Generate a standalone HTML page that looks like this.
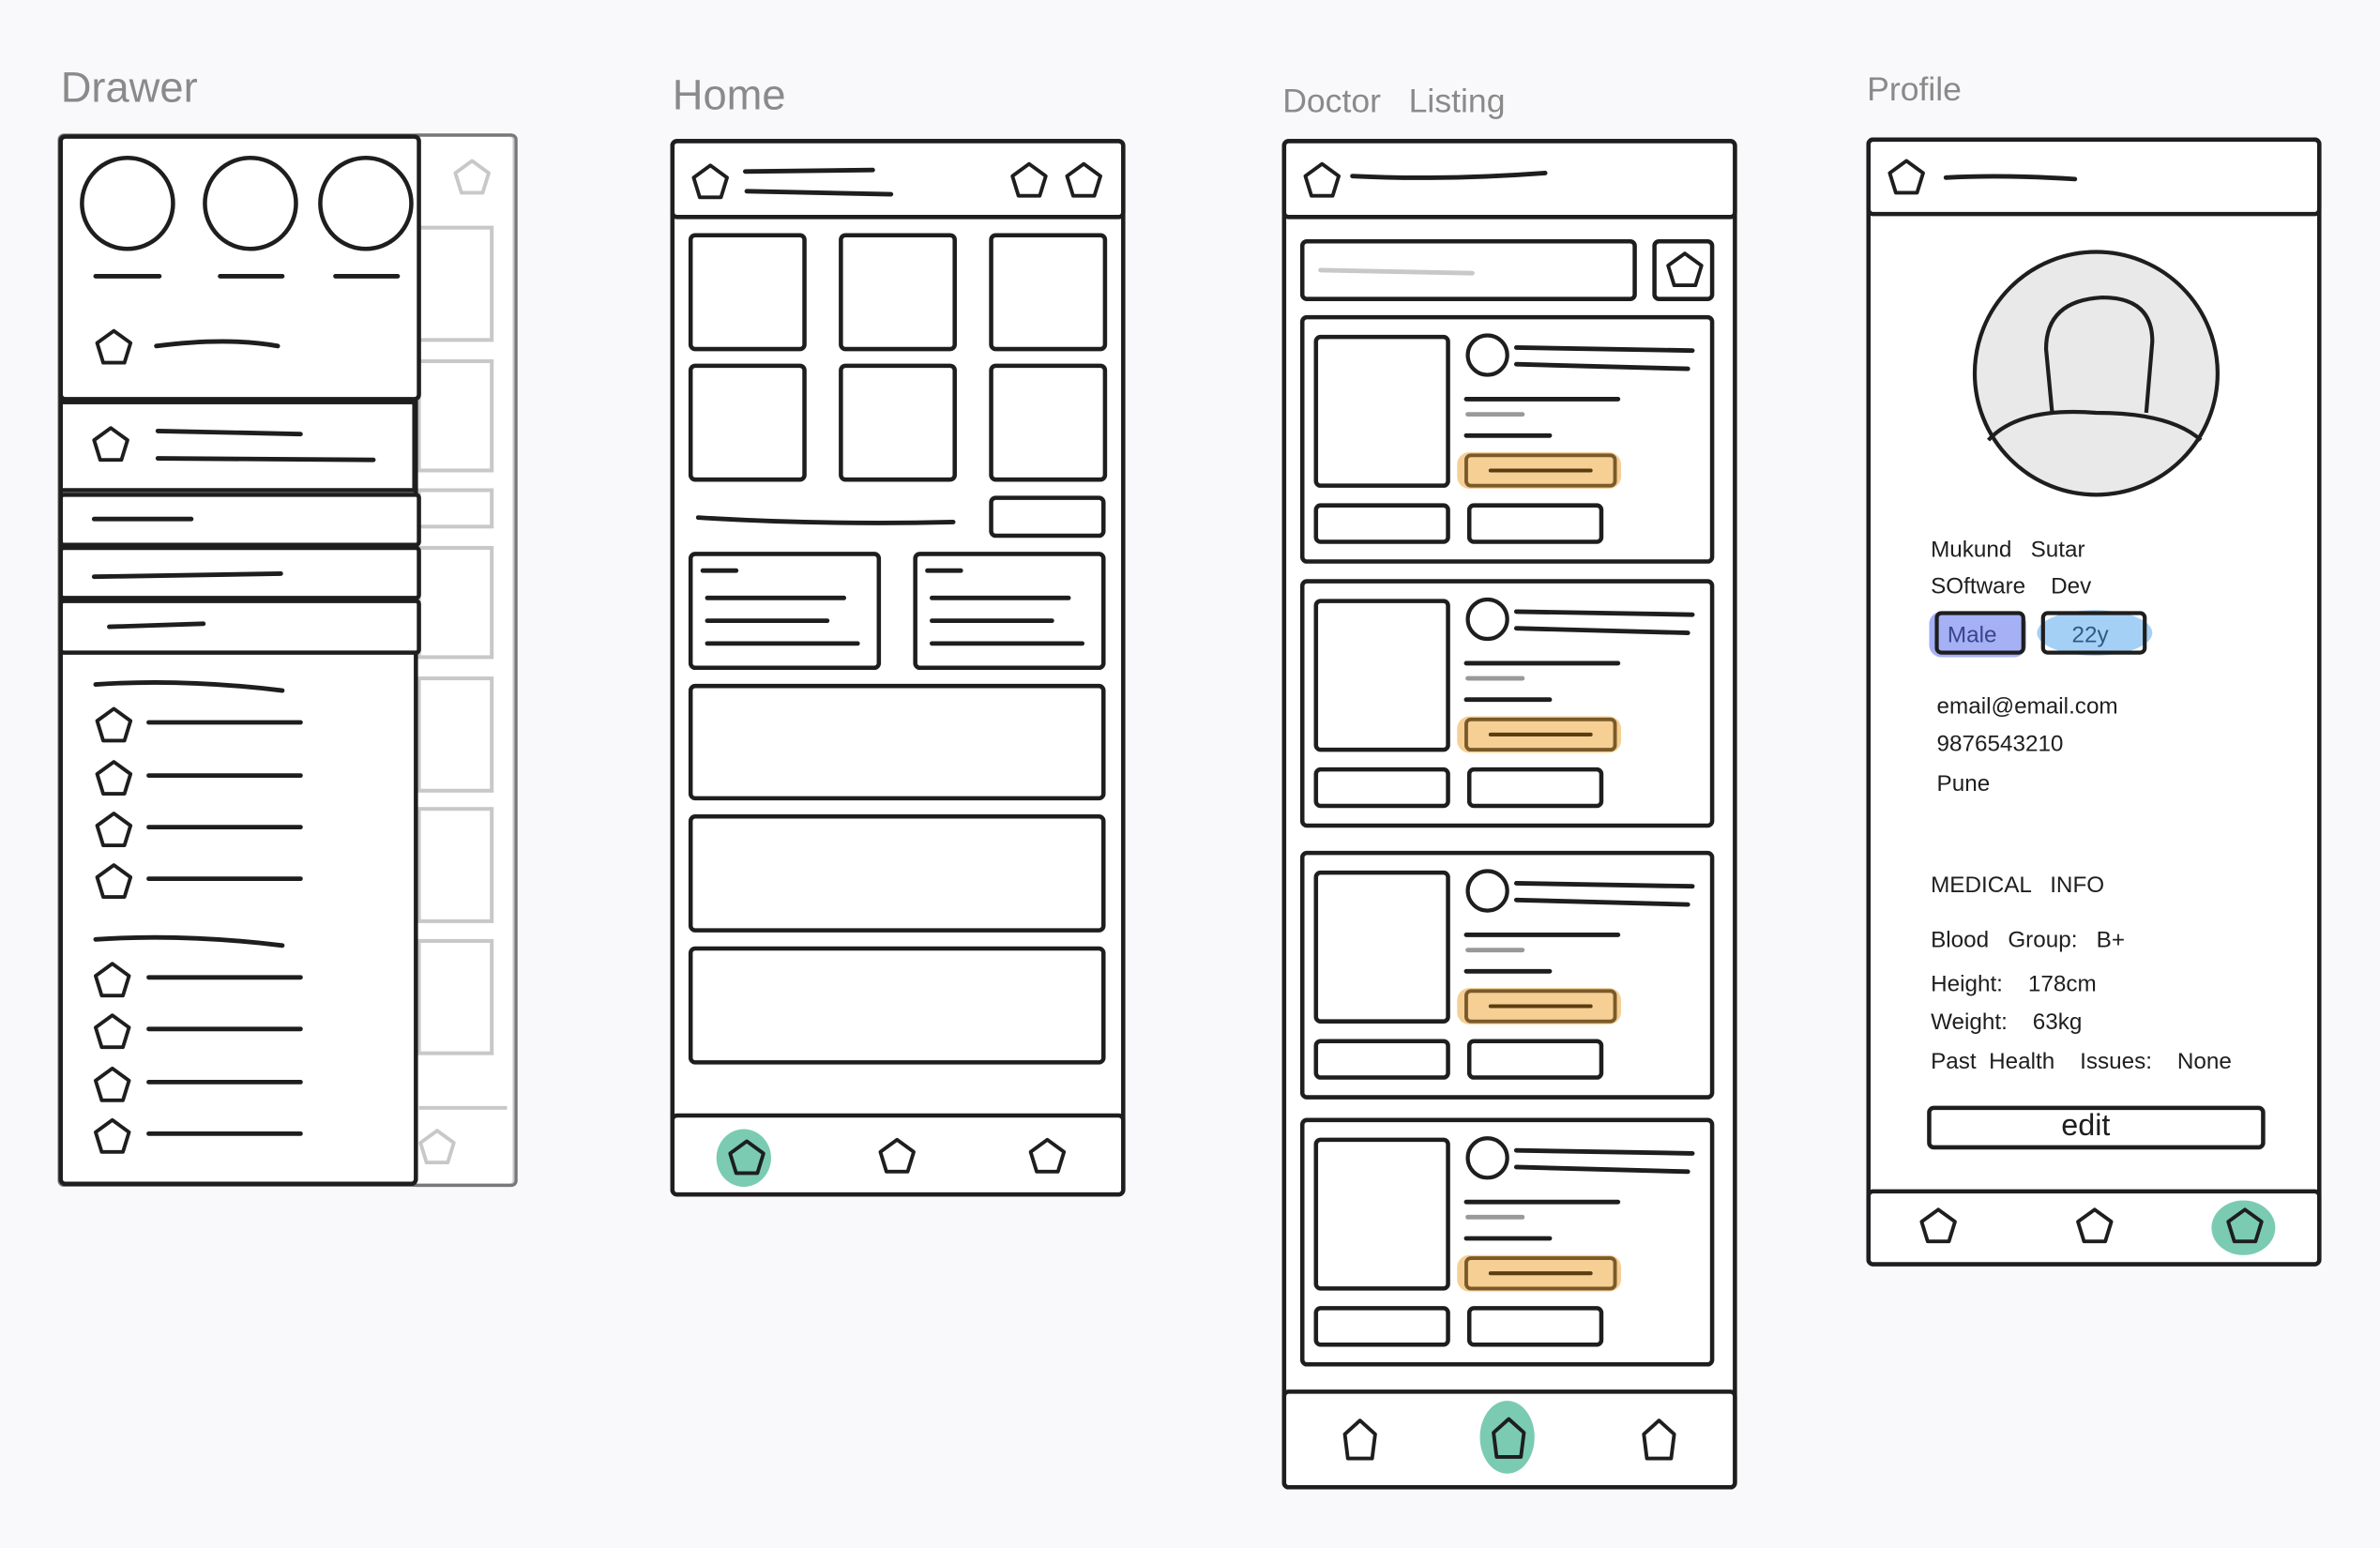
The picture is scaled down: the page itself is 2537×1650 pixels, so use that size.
<!DOCTYPE html>
<html><head><meta charset="utf-8"><style>
html,body{margin:0;padding:0;background:#f9f9fb;}
svg{display:block}
text{font-family:"Liberation Sans",sans-serif;white-space:pre;}
</style></head><body>
<svg width="2537" height="1650" viewBox="0 0 1568 1020" preserveAspectRatio="none" xmlns="http://www.w3.org/2000/svg" xml:space="preserve">
<defs>
<symbol id="pg" viewBox="-14 -14 28 28" overflow="visible"><path d="M0,-11 L11,-3 L7,10 L-7,10 L-11,-3 Z" fill="none" stroke="#1e1e1e" stroke-width="2.4" stroke-linejoin="round"/></symbol>
<symbol id="pgs" viewBox="-14 -14 28 28" overflow="visible"><path d="M0,-11 L11,-3 L7,10 L-7,10 L-11,-3 Z" fill="none" stroke="#c8c8c8" stroke-width="2.4" stroke-linejoin="round"/></symbol>
<symbol id="pgt" viewBox="-14 -14 28 28" overflow="visible"><path d="M0,-13 L10,-4 L8,12 L-8,12 L-10,-4 Z" fill="none" stroke="#1e1e1e" stroke-width="2.4" stroke-linejoin="round"/></symbol>
</defs>
<rect width="1568" height="1020" fill="#f9f9fb"/>
<g font-size="28" fill="#8a8a8a">
<text x="40" y="67">Drawer</text>
<text x="443" y="72">Home</text>
<text x="845" y="74" font-size="22">Doctor   Listing</text>
<text x="1230" y="66" font-size="22">Profile</text>
</g>

<!-- DRAWER -->
<g fill="none" stroke="#c8c8c8" stroke-width="2.5">
<rect x="272" y="89" width="67" height="692" rx="3" fill="#fff"/>
<rect x="276" y="150" width="48" height="74"/>
<rect x="276" y="238" width="48" height="72"/>
<rect x="276" y="323" width="48" height="24"/>
<rect x="276" y="361" width="48" height="72"/>
<rect x="276" y="447" width="48" height="74"/>
<rect x="276" y="533" width="48" height="74"/>
<rect x="276" y="620" width="48" height="74"/>
<line x1="276" y1="730" x2="334" y2="730"/>
</g>
<use href="#pgs" x="297" y="103" width="28" height="28"/>
<use href="#pgs" x="274" y="742" width="28" height="28"/>
<g fill="#fff" stroke="#1e1e1e" stroke-width="2.8">
<rect x="39" y="89" width="301" height="692" rx="3" fill="none" stroke="#777" stroke-width="2"/>
<rect x="40" y="90" width="234" height="690" rx="3"/>
<rect x="40" y="90" width="236" height="173" rx="3"/>
<circle cx="84" cy="134" r="30"/><circle cx="165" cy="134" r="30"/><circle cx="241" cy="134" r="30"/>
<rect x="40" y="265" width="233" height="58"/>
<rect x="40" y="326" width="236" height="33" rx="2"/>
<rect x="40" y="361" width="236" height="33" rx="2"/>
<rect x="40" y="396" width="236" height="34" rx="2"/>
</g>
<g stroke="#1e1e1e" stroke-width="3" stroke-linecap="round" fill="none">
<path d="M63 182 H105 M145 182 H186 M221 182 H262"/>
<path d="M103 228 Q150 222 183 228"/>
<path d="M104 284 L198 286 M104 302 L246 303"/>
<path d="M62 342 H126 M62 380 L185 378 M72 413 L134 411"/>
<path d="M63 451 Q120 447 186 455"/>
<path d="M98 476 H198 M98 511 H198 M98 545 H198 M98 579 H198"/>
<path d="M63 619 Q120 615 186 623"/>
<path d="M98 644 H198 M98 678 H198 M98 713 H198 M98 747 H198"/>
</g>
<g>
<use href="#pg" x="61" y="215" width="28" height="28"/>
<use href="#pg" x="59" y="279" width="28" height="28"/>
<use href="#pg" x="61" y="464" width="28" height="28"/>
<use href="#pg" x="61" y="499" width="28" height="28"/>
<use href="#pg" x="61" y="533" width="28" height="28"/>
<use href="#pg" x="61" y="567" width="28" height="28"/>
<use href="#pg" x="60" y="632" width="28" height="28"/>
<use href="#pg" x="60" y="666" width="28" height="28"/>
<use href="#pg" x="60" y="701" width="28" height="28"/>
<use href="#pg" x="60" y="735" width="28" height="28"/>
</g>

<!-- HOME -->
<g fill="#fff" stroke="#1e1e1e" stroke-width="2.8">
<rect x="443" y="93" width="297" height="694" rx="3"/>
<rect x="443" y="93" width="297" height="50" rx="3"/>
<rect x="455" y="155" width="75" height="75" rx="3"/>
<rect x="554" y="155" width="75" height="75" rx="3"/>
<rect x="653" y="155" width="75" height="75" rx="3"/>
<rect x="455" y="241" width="75" height="75" rx="3"/>
<rect x="554" y="241" width="75" height="75" rx="3"/>
<rect x="653" y="241" width="75" height="75" rx="3"/>
<rect x="653" y="328" width="74" height="25" rx="3"/>
<rect x="455" y="365" width="124" height="75" rx="3"/>
<rect x="603" y="365" width="124" height="75" rx="3"/>
<rect x="455" y="452" width="272" height="74" rx="3"/>
<rect x="455" y="538" width="272" height="75" rx="3"/>
<rect x="455" y="625" width="272" height="75" rx="3"/>
<rect x="443" y="735" width="297" height="52" rx="3"/>
</g>
<g stroke="#1e1e1e" stroke-width="3" stroke-linecap="round" fill="none">
<path d="M491 113 L575 112 M492 126 L587 128"/>
<path d="M460 341 Q540 346 628 344"/>
<path d="M463 376 H485 M466 394 H556 M466 409 H545 M466 424 H565"/>
<path d="M611 376 H633 M614 394 H704 M614 409 H693 M614 424 H713"/>
</g>
<use href="#pg" x="454" y="106" width="28" height="28"/>
<use href="#pg" x="664" y="105" width="28" height="28"/>
<use href="#pg" x="700" y="105" width="28" height="28"/>
<ellipse cx="490" cy="763" rx="18" ry="19" fill="#63c2a4" opacity="0.85"/>
<use href="#pg" x="478" y="749" width="28" height="28"/>
<use href="#pg" x="577" y="748" width="28" height="28"/>
<use href="#pg" x="676" y="748" width="28" height="28"/>

<!-- DOCTOR LISTING -->
<g fill="#fff" stroke="#1e1e1e" stroke-width="2.8">
<rect x="846" y="93" width="297" height="887" rx="3"/>
<rect x="846" y="93" width="297" height="50" rx="3"/>
<rect x="858" y="159" width="219" height="38" rx="3"/>
<rect x="1090" y="159" width="38" height="38" rx="3"/>
<rect x="846" y="917" width="297" height="63" rx="3"/>
</g>
<path d="M891 116 Q950 119 1018 114" stroke="#1e1e1e" stroke-width="3" fill="none" stroke-linecap="round"/>
<path d="M870 178 L970 180" stroke="#c8c8c8" stroke-width="3" fill="none" stroke-linecap="round"/>
<use href="#pg" x="857" y="105" width="28" height="28"/>
<use href="#pg" x="1096" y="164" width="28" height="28"/>
<g id="card">
<rect x="858" y="209" width="270" height="161" rx="3" fill="#fff" stroke="#1e1e1e" stroke-width="2.8"/>
<rect x="867" y="222" width="87" height="98" rx="3" fill="none" stroke="#1e1e1e" stroke-width="2.8"/>
<circle cx="980" cy="234" r="13" fill="none" stroke="#1e1e1e" stroke-width="2.6"/>
<path d="M999 229 L1115 231 M999 240 L1112 243 M966 263 H1066 M966 287 H1021" stroke="#1e1e1e" stroke-width="3" fill="none" stroke-linecap="round"/>
<path d="M967 273 H1003" stroke="#999" stroke-width="3" stroke-linecap="round"/>
<rect x="960" y="298" width="108" height="24" rx="8" fill="#f5cf94"/>
<rect x="966" y="300" width="98" height="20" rx="3" fill="none" stroke="#7a5a2a" stroke-width="2.4"/>
<path d="M982 310 H1048" stroke="#5a3d10" stroke-width="2.5" stroke-linecap="round"/>
<rect x="867" y="333" width="87" height="24" rx="3" fill="none" stroke="#1e1e1e" stroke-width="2.8"/>
<rect x="968" y="333" width="87" height="24" rx="3" fill="none" stroke="#1e1e1e" stroke-width="2.8"/>
</g>
<use href="#card" y="174"/>
<use href="#card" y="353"/>
<use href="#card" y="529"/>
<use href="#pgt" x="882" y="935" width="28" height="28"/>
<ellipse cx="993" cy="947" rx="18" ry="24" fill="#63c2a4" opacity="0.85"/>
<use href="#pgt" x="980" y="934" width="28" height="28"/>
<use href="#pgt" x="1079" y="935" width="28" height="28"/>

<!-- PROFILE -->
<g fill="#fff" stroke="#1e1e1e" stroke-width="2.8">
<rect x="1231" y="92" width="297" height="741" rx="3"/>
<rect x="1231" y="92" width="297" height="49" rx="3"/>
<rect x="1231" y="785" width="297" height="48" rx="3"/>
</g>
<path d="M1282 117 Q1320 115 1367 118" stroke="#1e1e1e" stroke-width="3" fill="none" stroke-linecap="round"/>
<use href="#pg" x="1242" y="103" width="28" height="28"/>
<circle cx="1381" cy="246" r="80" fill="#e9e9e9" stroke="#1e1e1e" stroke-width="2.6"/>
<path d="M1352 272 L1348 230 Q1348 198 1385 196 Q1418 196 1418 225 L1414 272" fill="none" stroke="#1e1e1e" stroke-width="2.6"/>
<path d="M1310 290 Q1330 268 1381 272 Q1430 272 1450 290" fill="none" stroke="#1e1e1e" stroke-width="2.6"/>
<g font-size="15" fill="#1e1e1e">
<text x="1272" y="367">Mukund   Sutar</text>
<text x="1272" y="391">SOftware    Dev</text>
<text x="1276" y="470">email@email.com</text>
<text x="1276" y="495">9876543210</text>
<text x="1276" y="521">Pune</text>
<text x="1272" y="588">MEDICAL   INFO</text>
<text x="1272" y="624">Blood   Group:   B+</text>
<text x="1272" y="653">Height:    178cm</text>
<text x="1272" y="678">Weight:    63kg</text>
<text x="1272" y="704">Past  Health    Issues:    None</text>
</g>
<rect x="1271" y="403" width="64" height="30" rx="8" fill="#a5b0f5"/>
<rect x="1276" y="404" width="57" height="26" rx="3" fill="none" stroke="#1e1e1e" stroke-width="2.6"/>
<text x="1283" y="423" font-size="15" fill="#37458a">Male</text>
<ellipse cx="1380" cy="417" rx="38" ry="15" fill="#a5d0f5"/>
<rect x="1346" y="404" width="67" height="26" rx="3" fill="none" stroke="#1e1e1e" stroke-width="2.6"/>
<text x="1365" y="423" font-size="15" fill="#2d5a86">22y</text>
<rect x="1271" y="730" width="220" height="26" rx="3" fill="#fff" stroke="#1e1e1e" stroke-width="2.8"/>
<text x="1358" y="748" font-size="20" fill="#1e1e1e">edit</text>
<use href="#pg" x="1263" y="794" width="28" height="28"/>
<use href="#pg" x="1366" y="794" width="28" height="28"/>
<ellipse cx="1478" cy="809" rx="21" ry="18" fill="#63c2a4" opacity="0.85"/>
<use href="#pg" x="1465" y="794" width="28" height="28"/>
</svg>
</body></html>
